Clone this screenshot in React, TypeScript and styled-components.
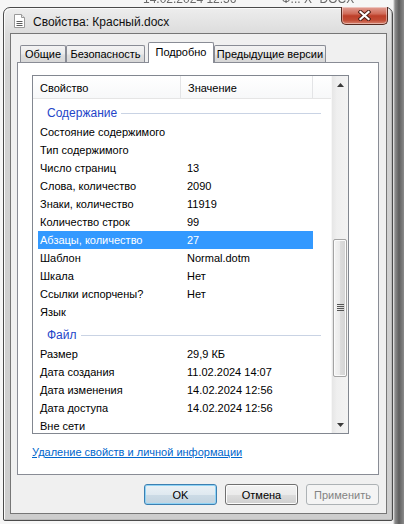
import React from 'react';
import styled, { createGlobalStyle } from 'styled-components';

const GlobalStyle = createGlobalStyle`
  html, body {
    margin: 0;
    padding: 0;
  }
  body {
    width: 404px;
    height: 524px;
    overflow: hidden;
    font-family: "Liberation Sans", Arial, sans-serif;
    font-size: 11px;
    color: #000;
  }
`;

const Desktop = styled.div`
  width: 404px;
  height: 524px;
  box-sizing: border-box;
  padding-left: 3px;
  overflow: hidden;
  background: linear-gradient(to right, #f6f6f6 0, #f6f6f6 393px, #8d8d8d 395px, #5f5f5f 399px, #8a8a8a 404px);
`;

const BackText = styled.div`
  height: 7px;
  overflow: hidden;
  display: flex;
  padding-left: 140px;
  gap: 45px;

  span {
    margin-top: -8px;
    line-height: 14px;
    font-size: 12px;
    color: #6a6a6a;
    filter: blur(0.6px);
  }
`;

const Window = styled.div`
  width: 390px;
  height: 514px;
  box-sizing: border-box;
  display: flex;
  flex-direction: column;
  padding: 0 5px 6px 6px;
  border: 1px solid #4b4b4b;
  border-radius: 7px 7px 2px 2px;
  background: linear-gradient(to bottom, #ededed 0, #dcdcdc 26px, #d2d2d2 60px, #cdcdcd 100%);
  box-shadow: inset 1px 1px 0 #fbfbfb, inset -1px -1px 0 #b9b9b9;
`;

const TitleBar = styled.div`
  height: 25px;
  display: flex;
  align-items: flex-start;
  margin-right: -1px;
`;

const TitleIcon = styled.svg`
  margin: 6px 0 0 4px;
  flex-shrink: 0;
`;

const TitleText = styled.div`
  margin: 7px 0 0 8px;
  line-height: 14px;
  font-size: 12px;
  color: #111;
`;

const CloseButton = styled.div`
  margin-left: auto;
  margin-top: -1px;
  width: 47px;
  height: 18px;
  box-sizing: border-box;
  display: flex;
  align-items: center;
  justify-content: center;
  border: 1px solid #55291f;
  border-top: none;
  border-radius: 0 0 5px 5px;
  background: linear-gradient(to bottom, #e2a096 0, #d06b58 40%, #bd3f29 52%, #c24c35 78%, #d88572 100%);
  box-shadow: inset 0 0 0 1px rgba(255, 255, 255, 0.4);
`;

const Client = styled.div`
  flex: 1;
  display: flex;
  flex-direction: column;
  padding: 8px 7px 0 6px;
  border: 1px solid #767676;
  background: #f0f0f0;
`;

const TabRow = styled.div`
  height: 21px;
  display: flex;
  align-items: flex-end;
  padding-left: 3px;
`;

const Tab = styled.div<{ $w: number; $active?: boolean; $gap?: number }>`
  width: ${p => p.$w}px;
  margin-left: ${p => p.$gap ?? 0}px;
  height: ${p => (p.$active ? 21 : 18)}px;
  box-sizing: border-box;
  text-align: center;
  line-height: ${p => (p.$active ? 19 : 17)}px;
  border: 1px solid #898c95;
  border-bottom: none;
  border-radius: 2px 2px 0 0;
  white-space: nowrap;
  background: ${p =>
    p.$active ? '#fff' : 'linear-gradient(to bottom, #f3f3f3 0, #ebebeb 45%, #dedede 55%, #d6d6d6 100%)'};
  position: ${p => (p.$active ? 'relative' : 'static')};
  z-index: ${p => (p.$active ? 1 : 'auto')};
`;

const Panel = styled.div`
  margin-top: -1px;
  height: 413px;
  box-sizing: border-box;
  border: 1px solid #898c95;
  background: #fff;
  padding: 12px 0 0 14px;
`;

const ListView = styled.div`
  width: 317px;
  height: 359px;
  box-sizing: border-box;
  border: 1px solid #828790;
  display: flex;
  overflow: hidden;
`;

const ListContent = styled.div`
  flex: 1;
  overflow: hidden;
`;

const Header = styled.div`
  height: 23px;
  box-sizing: border-box;
  display: flex;
  border-bottom: 1px solid #e5e5e5;
  background: linear-gradient(to bottom, #ffffff 0, #f7f8f9 100%);
`;

const HeaderCell = styled.div<{ $w?: number; $pad?: number }>`
  width: ${p => (p.$w ? `${p.$w}px` : 'auto')};
  flex: ${p => (p.$w ? 'none' : 1)};
  box-sizing: border-box;
  padding: 2px 0 0 ${p => p.$pad ?? 0}px;
  line-height: 20px;
  border-right: ${p => (p.$w ? '1px solid #e3e4e6' : 'none')};
`;

const GroupHeader = styled.div`
  height: 24px;
  box-sizing: border-box;
  padding: 4px 10px 0 14px;
  display: flex;
  align-items: center;
  line-height: 18px;
  font-size: 12px;
  color: #2445c8;

  &::after {
    content: '';
    flex: 1;
    height: 1px;
    margin-left: 4px;
    background: #c9d3e4;
  }
`;

const Row = styled.div<{ $selected?: boolean }>`
  height: 18px;
  width: 275px;
  margin-left: 5px;
  display: grid;
  grid-template-columns: 143px 132px;
  line-height: 18px;
  white-space: nowrap;
  background: ${p => (p.$selected ? '#3399ff' : 'transparent')};
  color: ${p => (p.$selected ? '#fff' : '#000')};
`;

const Cell = styled.div<{ $pad: number }>`
  padding-left: ${p => p.$pad}px;
  overflow: hidden;
`;

const ScrollBar = styled.div`
  width: 17px;
  display: flex;
  flex-direction: column;
  background: linear-gradient(to right, #e6e6e6 0, #efefef 30%, #f3f3f3 100%);
  border-left: 1px solid #f7f7f7;
  box-sizing: border-box;
`;

const ScrollArrow = styled.div`
  height: 17px;
  display: flex;
  align-items: center;
  justify-content: center;
`;

const ScrollTrack = styled.div`
  flex: 1;
  display: flex;
  flex-direction: column;
`;

const Thumb = styled.div`
  margin: 0 1px 0 1px;
  box-sizing: border-box;
  border: 1px solid #a3a3a3;
  border-radius: 2px;
  background: linear-gradient(to right, #f4f4f4 0, #eaeaea 50%, #dcdcdc 51%, #d4d4d4 100%);
  box-shadow: inset 0 0 0 1px #fbfbfb;
  display: flex;
  align-items: center;
  justify-content: center;
`;

const Link = styled.a`
  display: inline-block;
  margin-top: 10px;
  line-height: 16px;
  color: #0066cc;
  text-decoration: underline;
`;

const ButtonRow = styled.div`
  margin-top: 9px;
  display: flex;
  justify-content: flex-end;
  gap: 8px;
`;

const Button = styled.div<{ $variant?: 'default' | 'disabled' }>`
  width: 73px;
  height: 21px;
  box-sizing: border-box;
  display: flex;
  align-items: center;
  justify-content: center;
  border-radius: 3px;
  border: 1px solid ${p => (p.$variant === 'default' ? '#3c7fb1' : p.$variant === 'disabled' ? '#adb2b5' : '#707070')};
  color: ${p => (p.$variant === 'disabled' ? '#838383' : '#000')};
  background: ${p =>
    p.$variant === 'disabled'
      ? '#f4f4f4'
      : p.$variant === 'default'
      ? 'linear-gradient(to bottom, #eaf1f6 0, #dfe9f0 50%, #ccdbe6 51%, #c2d3df 100%)'
      : 'linear-gradient(to bottom, #f2f2f2 0, #ebebeb 50%, #dddddd 51%, #cfcfcf 100%)'};
  box-shadow: ${p =>
    p.$variant === 'default' ? 'inset 0 0 0 1px #8fd3f5' : p.$variant === 'disabled' ? 'none' : 'inset 0 0 0 1px #fcfcfc'};
`;

type Item = { name: string; value?: string; selected?: boolean };

const content: Item[] = [
  { name: 'Состояние содержимого' },
  { name: 'Тип содержимого' },
  { name: 'Число страниц', value: '13' },
  { name: 'Слова, количество', value: '2090' },
  { name: 'Знаки, количество', value: '11919' },
  { name: 'Количество строк', value: '99' },
  { name: 'Абзацы, количество', value: '27', selected: true },
  { name: 'Шаблон', value: 'Normal.dotm' },
  { name: 'Шкала', value: 'Нет' },
  { name: 'Ссылки испорчены?', value: 'Нет' },
  { name: 'Язык' },
];

const file: Item[] = [
  { name: 'Размер', value: '29,9 КБ' },
  { name: 'Дата создания', value: '11.02.2024 14:07' },
  { name: 'Дата изменения', value: '14.02.2024 12:56' },
  { name: 'Дата доступа', value: '14.02.2024 12:56' },
  { name: 'Вне сети' },
];

const renderRows = (items: Item[]) =>
  items.map(it => (
    <Row key={it.name} $selected={it.selected}>
      <Cell $pad={2}>{it.name}</Cell>
      <Cell $pad={6}>{it.value ?? ''}</Cell>
    </Row>
  ));

export default function App() {
  return (
    <Desktop>
      <GlobalStyle />
      <BackText>
        <span>14.02.2024 12:56</span>
        <span>Ф... Х "DOCX"</span>
      </BackText>
      <Window>
        <TitleBar>
          <TitleIcon width="11" height="14" viewBox="0 0 11 14">
            <path d="M0.5 0.5h7l3 3v10h-10z" fill="#fff" stroke="#9a9a9a" />
            <path d="M7.5 0.5v3h3" fill="#e8e8e8" stroke="#9a9a9a" />
            <path d="M2.5 7.5h6M2.5 9.5h6M2.5 11.5h6" stroke="#5c5c5c" />
          </TitleIcon>
          <TitleText>Свойства: Красный.docx</TitleText>
          <CloseButton>
            <svg width="13" height="11" viewBox="0 0 13 11">
              <path d="M2.5 2L10.5 9M10.5 2L2.5 9" stroke="#4a1c14" strokeWidth="4" strokeLinecap="square" />
              <path d="M2.5 2L10.5 9M10.5 2L2.5 9" stroke="#fff" strokeWidth="2.2" strokeLinecap="square" />
            </svg>
          </CloseButton>
        </TitleBar>
        <Client>
          <TabRow>
            <Tab $w={46}>Общие</Tab>
            <Tab $w={79}>Безопасность</Tab>
            <Tab $w={66} $gap={3} $active>
              Подробно
            </Tab>
            <Tab $w={112}>Предыдущие версии</Tab>
          </TabRow>
          <Panel>
            <ListView>
              <ListContent>
                <Header>
                  <HeaderCell $w={148} $pad={7}>
                    Свойство
                  </HeaderCell>
                  <HeaderCell $w={132} $pad={7}>
                    Значение
                  </HeaderCell>
                  <HeaderCell />
                </Header>
                <GroupHeader>Содержание</GroupHeader>
                {renderRows(content)}
                <GroupHeader>Файл</GroupHeader>
                {renderRows(file)}
              </ListContent>
              <ScrollBar>
                <ScrollArrow>
                  <svg width="7" height="4" viewBox="0 0 7 4">
                    <path d="M3.5 0L7 4H0z" fill="#3a3a3a" />
                  </svg>
                </ScrollArrow>
                <ScrollTrack>
                  <Thumb style={{ marginTop: 146, height: 138 }}>
                    <svg width="7" height="8" viewBox="0 0 7 8">
                      <path d="M0 0.5h7M0 2.5h7M0 4.5h7M0 6.5h7" stroke="#555" />
                    </svg>
                  </Thumb>
                </ScrollTrack>
                <ScrollArrow>
                  <svg width="7" height="4" viewBox="0 0 7 4">
                    <path d="M0 0H7L3.5 4z" fill="#3a3a3a" />
                  </svg>
                </ScrollArrow>
              </ScrollBar>
            </ListView>
            <Link>Удаление свойств и личной информации</Link>
          </Panel>
          <ButtonRow>
            <Button $variant="default">OK</Button>
            <Button>Отмена</Button>
            <Button $variant="disabled">Применить</Button>
          </ButtonRow>
        </Client>
      </Window>
    </Desktop>
  );
}
